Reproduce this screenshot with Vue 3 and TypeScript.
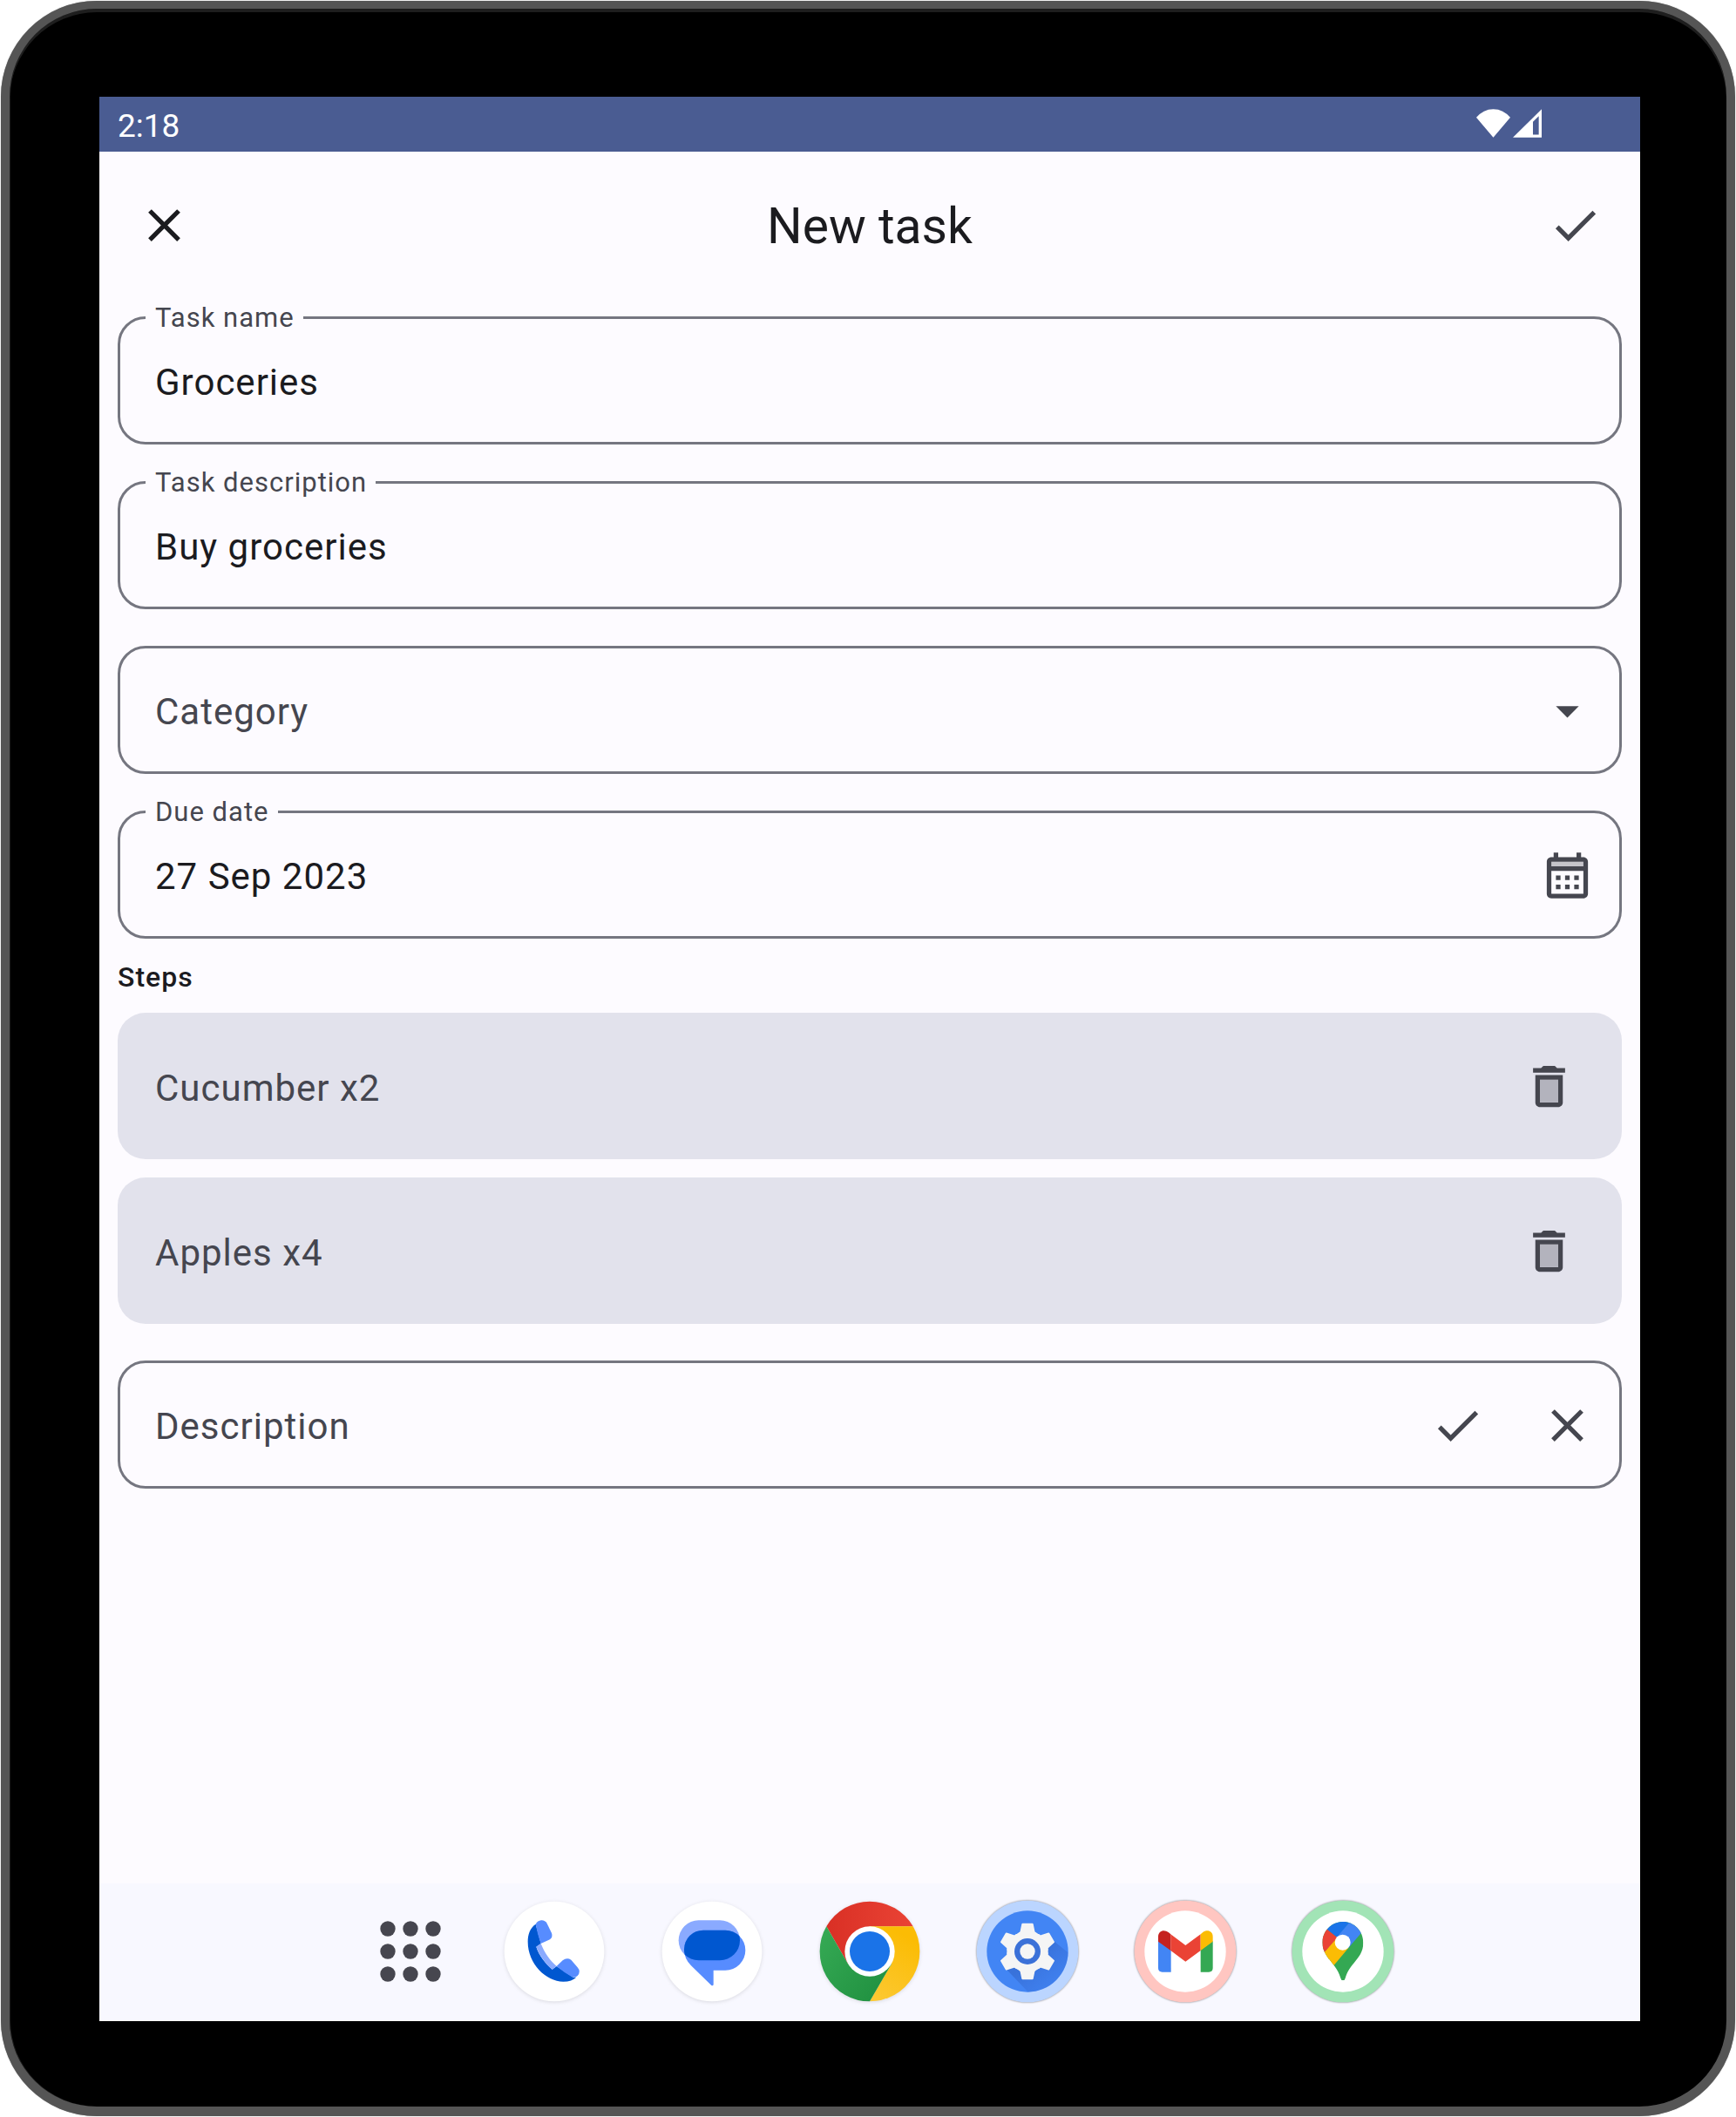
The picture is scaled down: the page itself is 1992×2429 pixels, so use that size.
<script setup lang="ts">
import { ref } from 'vue'

interface Step {
  id: number
  description: string
}

const taskName = ref('Groceries')
const taskDescription = ref('Buy groceries')
const category = ref('')
const categories: string[] = ['Home', 'Work', 'Health']
const dueDate = ref('27 Sep 2023')
const stepDraft = ref('')
const steps = ref<Step[]>([
  { id: 1, description: 'Cucumber x2' },
  { id: 2, description: 'Apples x4' },
])

const gearTeeth: number[] = [0, 60, 120, 180, 240, 300]
const dotOffsets: number[] = [-78, 0, 78]

const closePath =
  'M19 6.41 17.59 5 12 10.59 6.41 5 5 6.41 10.59 12 5 17.59 6.41 19 12 13.41 17.59 19 19 17.59 13.41 12z'
const checkPath = 'M9 16.17 4.83 12l-1.42 1.41L9 19 21 7l-1.41-1.41z'

function addStep(): void {
  const description = stepDraft.value.trim()
  if (!description) return
  steps.value.push({ id: Date.now(), description })
  stepDraft.value = ''
}

function removeStep(id: number): void {
  steps.value = steps.value.filter((step) => step.id !== id)
}
</script>

<template>
  <div class="device">
    <div class="screen">
      <div class="status-bar">
        <span class="clock">2:18</span>
        <div class="status-icons">
          <svg class="wifi" viewBox="366 375 117 98" aria-hidden="true">
            <path d="M366 404Q390 375 424.5 375T483 404L424.5 473z" />
          </svg>
          <svg class="signal" viewBox="492 376 99 98" aria-hidden="true">
            <path fill-rule="evenodd" d="M492 474 591 376V474zM561 420V464H581V400z" />
          </svg>
        </div>
      </div>

      <header class="top-bar">
        <button type="button" class="icon-button dark" aria-label="Close">
          <svg class="icon" viewBox="0 0 24 24"><path :d="closePath" /></svg>
        </button>
        <h1 class="title">New task</h1>
        <button type="button" class="icon-button" aria-label="Save">
          <svg class="icon" viewBox="0 0 24 24"><path :d="checkPath" /></svg>
        </button>
      </header>

      <main class="form">
        <div class="field">
          <label class="field-label" for="task-name">Task name</label>
          <input id="task-name" v-model="taskName" class="control" type="text" />
        </div>

        <div class="field">
          <label class="field-label" for="task-description">Task description</label>
          <input id="task-description" v-model="taskDescription" class="control" type="text" />
        </div>

        <div class="field">
          <select v-model="category" class="control select" aria-label="Category">
            <option value="" disabled>Category</option>
            <option v-for="name in categories" :key="name" :value="name">{{ name }}</option>
          </select>
          <svg class="icon select-arrow" viewBox="0 0 24 24" aria-hidden="true">
            <path d="M7 10l5 5 5-5z" />
          </svg>
        </div>

        <div class="field">
          <label class="field-label" for="due-date">Due date</label>
          <input id="due-date" v-model="dueDate" class="control" type="text" />
          <button type="button" class="icon-button" aria-label="Pick a date">
            <svg class="icon" viewBox="0 0 24 24">
              <path opacity=".3" d="M5 6h14v2H5z" />
              <path
                d="M19 4h-1V2h-2v2H8V2H6v2H5c-1.11 0-1.99.9-1.99 2L3 20c0 1.1.89 2 2 2h14c1.1 0 2-.9 2-2V6c0-1.1-.9-2-2-2zm0 16H5V10h14v10zm0-12H5V6h14v2zM9 14H7v-2h2v2zm4 0h-2v-2h2v2zm4 0h-2v-2h2v2zm-8 4H7v-2h2v2zm4 0h-2v-2h2v2zm4 0h-2v-2h2v2z"
              />
            </svg>
          </button>
        </div>

        <section class="steps">
          <h2 class="steps-title">Steps</h2>
          <ul class="step-list">
            <li v-for="step in steps" :key="step.id" class="step">
              <span class="step-text">{{ step.description }}</span>
              <button
                type="button"
                class="icon-button"
                :aria-label="`Delete ${step.description}`"
                @click="removeStep(step.id)"
              >
                <svg class="icon" viewBox="0 0 24 24">
                  <path opacity=".3" d="M8 9h8v10H8z" />
                  <path
                    d="M16 9v10H8V9h8m-1.5-6h-5l-1 1H5v2h14V4h-3.5l-1-1zM18 7H6v12c0 1.1.9 2 2 2h8c1.1 0 2-.9 2-2V7z"
                  />
                </svg>
              </button>
            </li>
          </ul>
        </section>

        <form class="field" @submit.prevent="addStep">
          <input
            v-model="stepDraft"
            class="control"
            type="text"
            placeholder="Description"
            aria-label="Description"
          />
          <button type="submit" class="icon-button" aria-label="Add step">
            <svg class="icon" viewBox="0 0 24 24"><path :d="checkPath" /></svg>
          </button>
          <button type="button" class="icon-button" aria-label="Clear" @click="stepDraft = ''">
            <svg class="icon" viewBox="0 0 24 24"><path :d="closePath" /></svg>
          </button>
        </form>
      </main>

      <nav class="taskbar" aria-label="Apps">
        <div class="slot all-apps">
          <button type="button" class="app" aria-label="All apps">
            <svg viewBox="-180 -180 360 360">
              <g fill="#46464f">
                <template v-for="y in dotOffsets" :key="y">
                  <circle v-for="x in dotOffsets" :key="x" :cx="x" :cy="y" r="26" />
                </template>
              </g>
            </svg>
          </button>
        </div>

        <div class="slot">
          <button type="button" class="app plain" aria-label="Phone">
            <svg viewBox="-180 -180 360 360">
              <circle r="172" fill="#fff" />
              <g transform="translate(-709 -298)">
                <path
                  fill="#0057d0"
                  d="M645 204C625 218 618 240 618 265C618 340 680 402 740 402C760 402 775 396 785 387H774L717 349L702 360C680 342 655 310 647 282L663 271Z"
                />
                <path
                  fill="#578cff"
                  d="M645 204Q652 192 664 191Q677 190 684 202L700 235Q705 249 694 257L663 271Q650 235 645 204Z"
                />
                <path
                  fill="#8aaaff"
                  d="M647 282L663 271C675 302 693 328 717 349L702 360C680 342 657 310 647 282Z"
                />
                <path
                  fill="#578cff"
                  d="M717 349L738 329Q752 318 767 327L789 353Q802 368 789 382Q782 388 770 386Q743 371 717 349Z"
                />
              </g>
            </svg>
          </button>
        </div>

        <div class="slot">
          <button type="button" class="app plain" aria-label="Messages">
            <svg viewBox="-180 -180 360 360">
              <defs>
                <clipPath id="back-bubble">
                  <rect x="1137" y="191" width="211" height="138" rx="69" />
                </clipPath>
              </defs>
              <circle r="172" fill="#fff" />
              <g transform="translate(-1252 -298)">
                <rect x="1137" y="191" width="211" height="138" rx="69" fill="#8aaaff" />
                <path
                  fill="#578cff"
                  d="M1222 225H1298A69 69 0 0 1 1298 363H1257V412Q1256 418 1250 415L1180 347Q1156 322 1156 291A66 66 0 0 1 1222 225Z"
                />
                <path
                  clip-path="url(#back-bubble)"
                  fill="#0057d0"
                  d="M1222 225H1298A69 69 0 0 1 1298 363H1257L1180 347Q1156 322 1156 291A66 66 0 0 1 1222 225Z"
                />
              </g>
            </svg>
          </button>
        </div>

        <div class="slot">
          <button type="button" class="app plain" aria-label="Chrome">
            <svg viewBox="-180 -180 360 360">
              <defs>
                <linearGradient id="chrome-red" x1="0" x2="1">
                  <stop offset="0" stop-color="#d93025" />
                  <stop offset="1" stop-color="#ea4335" />
                </linearGradient>
                <linearGradient id="chrome-yellow" x1="0" y1="1" x2="0.4" y2="0">
                  <stop offset="0" stop-color="#fcc934" />
                  <stop offset="1" stop-color="#fbbc04" />
                </linearGradient>
                <linearGradient id="chrome-green" x1="1" y1="1" x2="0" y2="0.2">
                  <stop offset="0" stop-color="#1e8e3e" />
                  <stop offset="1" stop-color="#34a853" />
                </linearGradient>
              </defs>
              <path
                fill="url(#chrome-red)"
                d="M-149 -86A172 172 0 0 1 149 -86H0L-75 43Z"
              />
              <path
                fill="url(#chrome-yellow)"
                d="M149 -86A172 172 0 0 1 0 172L75 43L0 -86Z"
              />
              <path
                fill="url(#chrome-green)"
                d="M0 172A172 172 0 0 1 -149 -86L-75 43L75 43Z"
              />
              <circle r="86" fill="#fff" />
              <circle r="69" fill="#1a73e8" />
            </svg>
          </button>
        </div>

        <div class="slot">
          <button type="button" class="app ringed" aria-label="Settings">
            <svg viewBox="-180 -180 360 360">
              <defs>
                <linearGradient id="gear-shade" x1="0" y1="0" x2="1" y2="1">
                  <stop offset="0.3" stop-color="#2f5fc0" stop-opacity="0.5" />
                  <stop offset="0.8" stop-color="#3367d6" stop-opacity="0" />
                </linearGradient>
                <clipPath id="gear-disc"><circle r="140" /></clipPath>
              </defs>
              <circle r="175" fill="#bbd5ff" />
              <circle r="140" fill="#4285f4" />
              <path
                clip-path="url(#gear-disc)"
                fill="url(#gear-shade)"
                d="M93 -34 190 45V190H50L-72 62Z"
              />
              <g fill="#f5f5f5" stroke="#f5f5f5" stroke-width="6" stroke-linejoin="round">
                <circle r="64" />
                <path
                  v-for="angle in gearTeeth"
                  :key="angle"
                  :transform="`rotate(${angle})`"
                  d="M-17 -94H17L22 -70Q24 -60 40 -56L0 0L-40 -56Q-24 -60 -22 -70Z"
                />
              </g>
              <circle r="45" fill="#3b71d8" />
              <circle r="26" fill="#f5f5f5" />
            </svg>
          </button>
        </div>

        <div class="slot">
          <button type="button" class="app ringed" aria-label="Gmail">
            <svg viewBox="-180 -180 360 360">
              <circle r="175" fill="#ffc6c1" />
              <circle r="140" fill="#fff" />
              <g transform="translate(-271 -298)">
                <path fill="#4285f4" d="M178 262L222 293V369H192Q178 369 178 355Z" />
                <path fill="#34a853" d="M366 262V355Q366 369 352 369H324V293Z" />
                <path fill="#ea4335" d="M221 239L272 277L324 239V295L272 333L221 295Z" />
                <path
                  fill="#c5221f"
                  d="M178 264V247C178 228 198 220 214 233L221 239V295Z"
                />
                <path
                  fill="#fbbc04"
                  d="M324 239L331 233C346 221 366 228 366 247V264L324 295Z"
                />
              </g>
            </svg>
          </button>
        </div>

        <div class="slot">
          <button type="button" class="app ringed" aria-label="Maps">
            <svg viewBox="-180 -180 360 360">
              <defs>
                <clipPath id="map-pin">
                  <path
                    d="M814 196C853 196 884 228 884 268C884 300 868 318 852 338C838 355 829 368 822 390Q820 398 814 398Q808 398 806 390C800 372 795 362 783 346C765 323 743 300 743 267C743 228 775 196 814 196Z"
                  />
                </clipPath>
              </defs>
              <circle r="175" fill="#a2e4b6" />
              <circle r="140" fill="#fff" />
              <g transform="translate(-814 -298)">
                <g clip-path="url(#map-pin)">
                  <path fill="#34a853" d="M740 190H890V400H740Z" />
                  <path fill="#fbbc04" d="M740 312L795 247L833 286L770 361Z" />
                  <path fill="#ea4335" d="M740 206L795 250L740 312Z" />
                  <path fill="#1a73e8" d="M740 206V190H843L795 251Z" />
                  <path fill="#4285f4" d="M843 190H915L833 286L795 247Z" />
                </g>
                <circle cx="813" cy="267" r="27" fill="#fff" />
              </g>
            </svg>
          </button>
        </div>
      </nav>
    </div>
  </div>
</template>

<style>
body {
  margin: 0;
  background: #fff;
}
</style>

<style scoped>
.device {
  box-sizing: border-box;
  display: flex;
  min-height: calc(100vh - 2px);
  margin: 1px;
  padding: 101px 99px 98px 103px;
  border: solid #555;
  border-width: 9px 10px 11px 10px;
  border-radius: 110px;
  background: #000;
  box-shadow:
    inset 0 4px 0 #1e1e1e,
    inset 1px 0 0 #1e1e1e,
    0 0 1px #777;
  font-family: Roboto, 'Noto Sans', sans-serif;
  color: #1b1b1f;
}

.screen {
  flex: 1;
  min-width: 0;
  display: flex;
  flex-direction: column;
  background: #fdfbff;
}

.status-bar {
  display: flex;
  align-items: center;
  justify-content: space-between;
  height: 63px;
  padding: 0 113px 0 21px;
  background: #4a5c92;
  color: #fff;
}

.clock {
  padding-top: 4px;
  font-size: 37px;
  line-height: 42px;
}

.status-icons {
  display: flex;
  gap: 3px;
  padding-bottom: 2px;
  fill: #fff;
}

.wifi {
  width: 39px;
  height: 33px;
}

.signal {
  width: 33px;
  height: 33px;
}

.top-bar {
  display: flex;
  align-items: center;
  justify-content: space-between;
  height: 168px;
  padding: 0 11px;
}

.title {
  margin: 0;
  padding-top: 4px;
  font-size: 57px;
  font-weight: 400;
  line-height: 74px;
}

.icon-button {
  display: flex;
  flex: none;
  align-items: center;
  justify-content: center;
  width: 126px;
  height: 126px;
  padding: 0;
  border: 0;
  background: none;
  color: #45464f;
}

.icon-button.dark {
  color: #1b1b1f;
}

.icon {
  display: block;
  width: 63px;
  height: 63px;
  fill: currentColor;
}

.form {
  flex: 1;
  display: flex;
  flex-direction: column;
  padding: 21px 21px 42px;
}

.field {
  box-sizing: border-box;
  position: relative;
  display: flex;
  align-items: center;
  height: 147px;
  margin-bottom: 42px;
  border: 3px solid #757680;
  border-radius: 32px;
}

.field > .icon-button {
  padding-top: 2px;
}

.field > .icon-button:last-child {
  margin-right: -3px;
}

/* Sits on the outline and opens a notch in it. */
.field-label {
  position: absolute;
  top: -22px;
  left: 29px;
  padding: 0 10px 0 11px;
  background: #fdfbff;
  color: #45464f;
  font-size: 31px;
  letter-spacing: 1px;
  line-height: 42px;
}

.control {
  flex: 1;
  box-sizing: border-box;
  min-width: 0;
  height: 100%;
  padding: 4px 0 0 40px;
  border: 0;
  border-radius: 29px;
  outline: 0;
  background: none;
  color: #1b1b1f;
  font: 400 42px/63px Roboto, 'Noto Sans', sans-serif;
  letter-spacing: 1px;
}

.control::placeholder {
  color: #45464f;
  opacity: 1;
}

.select {
  appearance: none;
  color: #45464f;
}

.select-arrow {
  position: absolute;
  right: 28px;
  padding-top: 2px;
  color: #45464f;
  pointer-events: none;
}

.steps {
  margin: -21px 0 42px;
}

.steps-title {
  margin: 0 0 20px;
  padding-top: 2px;
  font-size: 32px;
  font-weight: 500;
  letter-spacing: 1px;
  line-height: 42px;
}

.step-list {
  display: flex;
  flex-direction: column;
  gap: 21px;
  margin: 0;
  padding: 0;
  list-style: none;
}

.step {
  display: flex;
  align-items: center;
  justify-content: space-between;
  height: 168px;
  padding: 0 21px 0 43px;
  border-radius: 32px;
  background: #e2e2ec;
  color: #45464f;
}

.step-text {
  padding-top: 4px;
  font-size: 42px;
  letter-spacing: 1px;
  line-height: 63px;
}

.taskbar {
  box-sizing: border-box;
  display: flex;
  align-items: center;
  justify-content: center;
  height: 158px;
  padding: 0 0 2px 31px;
  background: #f8f8ff;
}

.slot {
  display: flex;
  justify-content: center;
  width: 181px;
}

.all-apps {
  width: 150px;
}

.app {
  display: block;
  width: 120px;
  height: 120px;
  padding: 0;
  border: 0;
  border-radius: 50%;
  background: none;
}

.app svg {
  display: block;
  width: 100%;
  height: 100%;
}

.plain svg {
  filter: drop-shadow(0 1px 2px rgb(0 0 0 / 12%));
}

.ringed svg {
  overflow: visible;
  filter: drop-shadow(0 0 1px rgb(0 0 0 / 50%));
}
</style>
